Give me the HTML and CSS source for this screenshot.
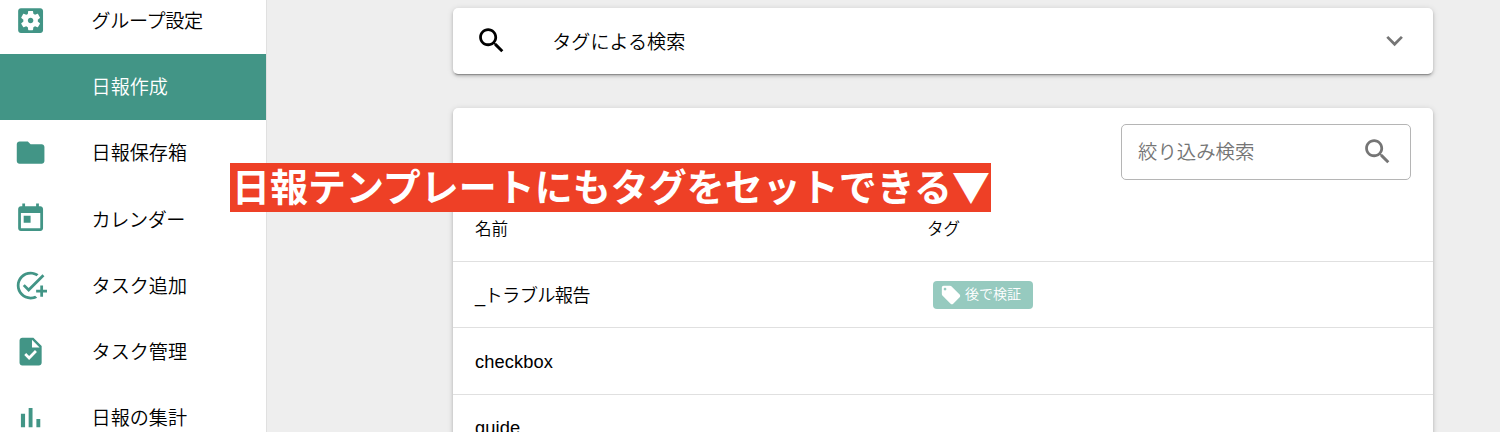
FILE: index.html
```html
<!DOCTYPE html>
<html lang="ja">
<head>
<meta charset="utf-8">
<title>日報作成</title>
<link rel="stylesheet" href="styles.css">
</head>
<body>
<div class="app">
  <nav class="sidebar">
    <a class="nav-item"><svg class="icon" viewBox="0 0 24 24"><path d="M12 10c-1.1 0-2 .9-2 2s.9 2 2 2 2-.9 2-2-.9-2-2-2zm7-7H5c-1.11 0-2 .9-2 2v14c0 1.1.89 2 2 2h14c1.11 0 2-.9 2-2V5c0-1.1-.89-2-2-2zm-1.750 9c0 .23-.02.46-.05.68l1.480 1.160c.13.11.17.3.08.45l-1.400 2.420c-.09.15-.27.21-.43.15l-1.740-.7c-.36.28-.76.51-1.180.69l-.26 1.850c-.03.17-.18.3-.35.3h-2.800c-.17 0-.32-.13-.35-.29l-.26-1.850c-.43-.18-.82-.41-1.180-.69l-1.740.7c-.16.06-.34 0-.43-.15l-1.400-2.420c-.09-.15-.05-.34.08-.45l1.480-1.160c-.03-.23-.05-.46-.05-.69 0-.23.02-.46.05-.68l-1.480-1.160c-.13-.11-.17-.3-.08-.45l1.400-2.420c.09-.15.27-.21.43-.15l1.740.7c.36-.28.76-.51 1.180-.69l.26-1.850c.03-.17.18-.3.35-.3h2.800c.17 0 .32.13.35.29l.26 1.850c.43.18.82.41 1.180.69l1.740-.7c.16-.06.34 0 .43.15l1.400 2.420c.09.15.05.34-.08.45l-1.480 1.160c.03.23.05.46.05.69z"/></svg><span class="nav-label kana">グループ設定</span></a>
    <a class="nav-item active"><span class="icon"></span><span class="nav-label">日報作成</span></a>
    <a class="nav-item"><svg class="icon" viewBox="0 0 24 24"><path d="M10 4H4c-1.100 0-1.990.9-1.990 2L2 18c0 1.100.9 2 2 2h16c1.100 0 2-.9 2-2V8c0-1.100-.9-2-2-2h-8l-2-2z"/></svg><span class="nav-label">日報保存箱</span></a>
    <a class="nav-item"><svg class="icon" viewBox="0 0 24 24"><path d="M19 3h-1V1h-2v2H8V1H6v2H5c-1.110 0-1.990.9-1.990 2L3 19c0 1.100.89 2 2 2h14c1.100 0 2-.9 2-2V5c0-1.100-.9-2-2-2zm0 16H5V8h14v11zM7 10h5v5H7z"/></svg><span class="nav-label kana">カレンダー</span></a>
    <a class="nav-item"><svg class="icon" viewBox="0 0 24 24"><path d="M22 5.180L10.590 16.600l-4.240-4.240 1.410-1.410 2.830 2.830 10-10L22 5.180zM12 20c-4.410 0-8-3.590-8-8s3.590-8 8-8c1.570 0 3.040.46 4.280 1.250l1.450-1.450C16.100 2.670 14.130 2 12 2 6.480 2 2 6.480 2 12s4.480 10 10 10c1.730 0 3.360-.44 4.780-1.220l-1.500-1.500c-1 .46-2.110.72-3.280.72zm7-5h-3v2h3v3h2v-3h3v-2h-3v-3h-2v3z"/></svg><span class="nav-label">タスク追加</span></a>
    <a class="nav-item"><svg class="icon" viewBox="0 0 24 24"><path d="M14 2H6c-1.100 0-1.990.9-1.990 2L4 20c0 1.100.89 2 1.990 2H18c1.100 0 2-.9 2-2V8l-6-6zm-3.060 16L7.400 14.460l1.410-1.410 2.120 2.120 4.240-4.240 1.410 1.410L10.940 18zM13 9V3.500L18.500 9H13z"/></svg><span class="nav-label">タスク管理</span></a>
    <a class="nav-item"><svg class="icon" viewBox="0 0 24 24"><path d="M5 9.200h3V19H5zM10.600 5h2.800v14h-2.800zm5.600 8H19v6h-2.800z"/></svg><span class="nav-label">日報の集計</span></a>
  </nav>
  <main class="content">
    <section class="card tag-search">
      <svg class="icon search-icon" viewBox="0 0 24 24"><path d="M15.500 14h-.79l-.28-.27C15.410 12.590 16 11.110 16 9.500 16 5.910 13.090 3 9.500 3S3 5.910 3 9.500 5.910 16 9.500 16c1.610 0 3.090-.59 4.230-1.570l.27.28v.79l5 4.990L20.490 19l-4.990-5zm-6 0C7.010 14 5 11.990 5 9.500S7.010 5 9.500 5 14 7.010 14 9.500 11.990 14 9.500 14z"/></svg>
      <span class="tag-search-title">タグによる検索</span>
      <svg class="icon muted" viewBox="0 0 24 24"><path d="M16.590 8.590L12 13.170 7.410 8.590 6 10l6 6 6-6z"/></svg>
    </section>
    <section class="card list">
      <div class="toolbar">
        <div class="filter">
          <span class="placeholder">絞り込み検索</span>
          <svg class="icon muted" viewBox="0 0 24 24"><path d="M15.500 14h-.79l-.28-.27C15.410 12.590 16 11.110 16 9.500 16 5.910 13.090 3 9.500 3S3 5.910 3 9.500 5.910 16 9.500 16c1.610 0 3.090-.59 4.230-1.570l.27.28v.79l5 4.990L20.490 19l-4.990-5zm-6 0C7.010 14 5 11.990 5 9.500S7.010 5 9.500 5 14 7.010 14 9.500 11.990 14 9.500 14z"/></svg>
        </div>
      </div>
      <div class="row head"><span>名前</span><span>タグ</span></div>
      <div class="row"><span class="jp-name">_トラブル報告</span><span class="chip"><svg class="chip-icon" viewBox="0 0 24 24"><path d="M21.410 11.580l-9-9C12.050 2.220 11.550 2 11 2H4c-1.100 0-2 .9-2 2v7c0 .55.22 1.050.59 1.420l9 9c.36.36.86.58 1.410.58.55 0 1.050-.22 1.410-.59l7-7c.37-.36.59-.86.59-1.410 0-.55-.23-1.060-.59-1.420zM5.500 7C4.670 7 4 6.330 4 5.500S4.670 4 5.500 4 7 4.670 7 5.500 6.330 7 5.500 7z"/></svg><span class="chip-text">後で検証</span></span></div>
      <div class="row"><span class="latin-name">checkbox</span></div>
      <div class="row"><span class="latin-name">guide</span></div>
    </section>
  </main>
  <div class="banner">日報テンプレートにもタグをセットできる▼</div>
</div>
</body>
</html>
```
FILE: styles.css
```css
* { box-sizing: border-box; }

body {
  margin: 0;
  background: #eee;
  color: #000;
  font-family: "Liberation Sans", "Noto Sans CJK JP", sans-serif;
  font-size: 19.1px;
  font-weight: 350;
}

.app {
  position: relative;
  display: flex;
  height: 432px;
  overflow: hidden;
}

.sidebar {
  flex: none;
  width: 267px;
  height: 465px;
  margin-top: -12.5px;
  background: #fff;
  border-right: 1px solid #e0e0e0;
}

.nav-item {
  display: flex;
  align-items: center;
  height: 66.3px;
  padding-left: 13.5px;
}

.active {
  background: #429586;
  color: #fff;
}

.icon {
  flex: none;
  width: 33.2px;
  height: 33.2px;
  fill: #429586;
}

.nav-item .icon { margin-bottom: 1px; }

.nav-label {
  margin-left: 44.9px;
  padding-top: 2px;
  line-height: 28px;
}

.kana { letter-spacing: -.4px; }

.content {
  flex: none;
  width: 980px;
  margin-left: 186px;
  padding-top: 8px;
}

.card {
  background: #fff;
  border-radius: 5px;
  box-shadow: 0 3px 1px -2px rgba(0, 0, 0, .25), 0 2px 3px rgba(0, 0, 0, .18), 0 1px 6px rgba(0, 0, 0, .14);
}

.tag-search {
  display: flex;
  align-items: center;
  height: 66px;
  padding: 0 22px;
}

.search-icon { fill: #000; }

.tag-search-title {
  flex: 1;
  margin-left: 44px;
  padding-bottom: 1px;
}

.muted { fill: #757575; }

.list {
  height: 380px;
  margin-top: 34px;
}

.toolbar {
  display: flex;
  justify-content: flex-end;
  height: 87px;
  padding: 16px 22px 0;
}

.filter {
  display: flex;
  align-items: center;
  justify-content: space-between;
  width: 290px;
  height: 56px;
  padding: 0 16px;
  border: 1px solid #b5b5b5;
  border-radius: 5px;
}

.placeholder {
  padding-bottom: 4px;
  color: #757575;
  font-size: 19.4px;
}

.row {
  display: grid;
  grid-template-columns: 458px 1fr;
  align-items: center;
  height: 66.4px;
  padding-left: 22px;
  border-bottom: 1px solid #e0e0e0;
  font-size: 18.3px;
}

.head {
  grid-template-columns: 452px 1fr;
  height: 67px;
  font-size: 16.6px;
}

.jp-name {
  padding-bottom: 2px;
  letter-spacing: -.7px;
}

.latin-name {
  padding-top: 2px;
  letter-spacing: .1px;
}

.chip {
  display: flex;
  align-items: center;
  justify-self: start;
  width: 100px;
  height: 28px;
  padding-left: 7px;
  border-radius: 4px;
  background: #96cabf;
  color: #fff;
  font-size: 14px;
}

.chip-icon {
  width: 22px;
  height: 22px;
  margin-right: 3px;
  fill: #fff;
}

.chip-text { padding-bottom: 3px; }

/* Callout laid over the sidebar and the list */
.banner {
  position: absolute;
  left: 230px;
  top: 163px;
  width: 761px;
  height: 49px;
  padding-left: 2px;
  background: #ee4026;
  color: #fff;
  font-family: "Noto Sans CJK JP", sans-serif;
  font-size: 38px;
  font-weight: 700;
  line-height: 44px;
  white-space: nowrap;
}
```
